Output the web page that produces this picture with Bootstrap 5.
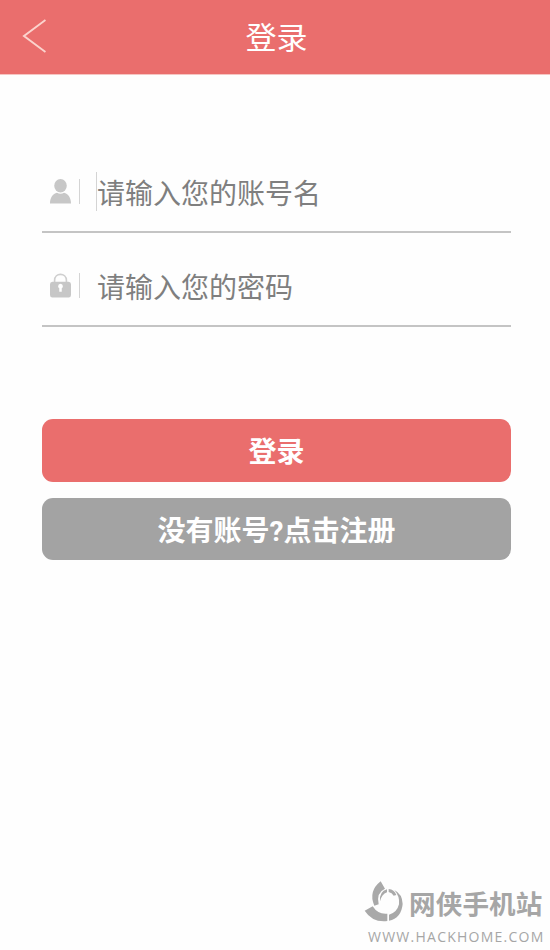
<!DOCTYPE html>
<html lang="zh-CN">
<head>
<meta charset="utf-8">
<meta name="viewport" content="width=device-width, initial-scale=1">
<title>登录</title>
<link href="https://cdn.jsdelivr.net/npm/bootstrap@5.3.0/dist/css/bootstrap.min.css" rel="stylesheet">
<style>
body{font-family:"Noto Sans CJK SC",sans-serif;background:#fefefe}
svg{display:block;flex:none}
.topbar{height:75px;background:#ea6e6d;border-bottom:1px solid #f6c5c2;padding:0 19px 0 22px}
.topbar h1{font-size:31px;line-height:72px;padding-bottom:2px;font-weight:400}
.side{width:24px}
.login-form{padding:64px 39px 0 42px}
.field{height:94px;border-bottom:2px solid #c4c4c4;padding:13px 0 0 8px}
.sep{width:1px;height:25px;background:#d4d4d4;margin-left:8px}
.field input{font-size:28px;line-height:40px;height:40px;margin-left:17px;color:#7f7f7f}
.field input::placeholder{color:#7f7f7f;opacity:1}
.caret{width:1px;height:39px;background:#d4d4d4;margin:0 -1px 0 16px}
.caret + input{margin-left:1px}
.actions{padding-top:92px;gap:16px}
.btn-login,.btn-join{height:62.5px;border:0;border-radius:11px;font-family:Roboto,"Noto Sans CJK SC",sans-serif;font-size:28px;line-height:57px;font-weight:700;padding:5px 0 0;color:#fff}
.btn-login,.btn-login:hover{background:#ea6e6d;color:#fff}
.btn-join,.btn-join:hover{background:#a3a3a3;color:#fff}
.site-mark{width:190px;height:75px;color:#a6a6a6}
.site-name{font-size:26.5px;line-height:34px;font-weight:700;letter-spacing:.2px;margin:11px 0 0 -1px}
.site-url{font-family:"Open Sans",sans-serif;font-size:14px;line-height:18px;letter-spacing:1.25px;padding-left:8px;margin-top:3px;font-weight:500}
</style>
</head>
<body>
<div class="d-flex flex-column min-vh-100 overflow-hidden">
  <header class="topbar d-flex align-items-center justify-content-between">
    <a href="#" class="side" aria-label="返回"><svg width="24" height="36" viewBox="0 0 24 36" fill="none" stroke="#fbd3cd" stroke-width="2"><path d="M23.500 1 2 17 23.500 33"/></svg></a>
    <h1 class="text-white m-0">登录</h1>
    <span class="side"></span>
  </header>
  <form class="login-form">
    <div class="field d-flex align-items-center">
      <svg width="21" height="26" viewBox="0 0 22 26" preserveAspectRatio="none" fill="#c7c7c7"><ellipse cx="11" cy="6.700" rx="6.600" ry="6.700"/><path d="M0 24.500C0 18.500 3 15 7.300 13.800Q11 15.600 14.700 13.800C19 15 22 18.500 22 24.500Z"/></svg>
      <span class="sep"></span>
      <span class="caret"></span>
      <input class="border-0 p-0 bg-transparent flex-grow-1 shadow-none" type="text" placeholder="请输入您的账号名">
    </div>
    <div class="field d-flex align-items-center">
      <svg width="21" height="26" viewBox="0 0 22 26" preserveAspectRatio="none"><path d="M4.800 11V7.500C4.800-.7 17.200-.7 17.200 7.500V11" fill="none" stroke="#cfcfcf" stroke-width="1.700"/><rect y="8.800" width="22" height="15.700" rx="2.500" fill="#c7c7c7"/><path d="M8.500 13.200a2.500 2.500 0 0 1 5 0q0 1.300-1.200 2.100v3.500h-2.600v-3.500q-1.200-.8-1.200-2.100" fill="#fff"/></svg>
      <span class="sep"></span>
      <input class="border-0 p-0 bg-transparent flex-grow-1 shadow-none" type="password" placeholder="请输入您的密码">
    </div>
    <div class="actions d-flex flex-column">
      <button type="button" class="btn btn-login w-100">登录</button>
      <button type="button" class="btn btn-join w-100">没有账号?点击注册</button>
    </div>
  </form>
  <footer class="site-mark mt-auto ms-auto">
    <div class="d-flex">
      <svg width="50" height="50" viewBox="0 0 150 150" fill="#a9a9a9"><path d="M62 19 75 41Q48 53 56 88L43 92Q24 49 62 19Z"/><path d="M14 107 38 94Q54 119 82 116V138Q37 143 14 107Z"/><path d="M103 45Q127 57 128 87 124 130 87 137V119Q111 113 117 88 120 64 103 45Z"/><path d="M60 79Q57 50 81 43V52Q65 58 60 79ZM86 42Q103 43 109 60L101 62Q96 53 86 51Z"/></svg>
      <div class="site-name text-nowrap">网侠手机站</div>
    </div>
    <div class="site-url text-nowrap">WWW.HACKHOME.COM</div>
  </footer>
</div>
<script src="https://cdn.jsdelivr.net/npm/bootstrap@5.3.0/dist/js/bootstrap.bundle.min.js"></script>
</body>
</html>
